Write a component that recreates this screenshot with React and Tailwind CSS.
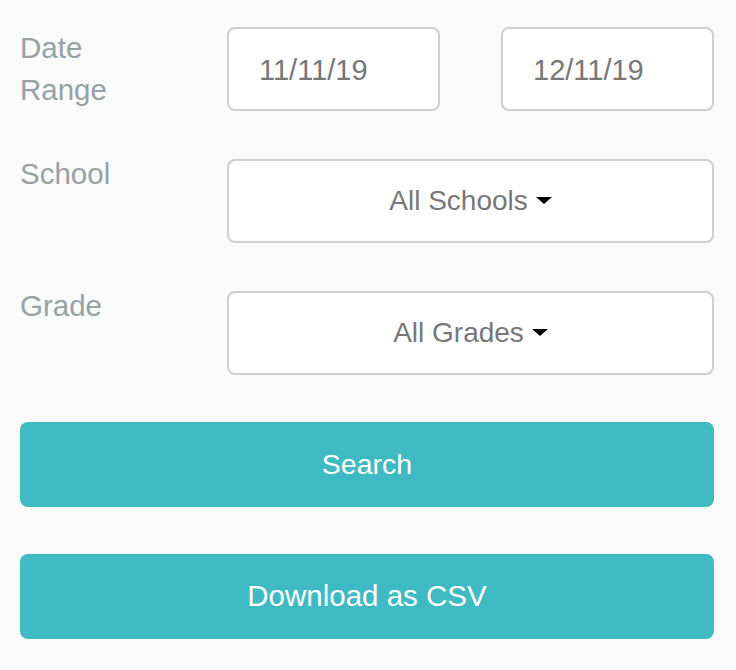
import React from 'react';

const font = { fontFamily: '"Liberation Sans", Arial, Helvetica, sans-serif' };

const Caret = () => (
  <span className="inline-block ml-[8px] w-0 h-0 border-l-[8px] border-r-[8px] border-t-[7px] border-l-transparent border-r-transparent border-t-black align-middle relative top-[-1px]" />
);

const DateInput = ({ value }) => (
  <input
    type="text"
    readOnly
    defaultValue={value}
    className="w-[213px] h-[84px] bg-white border-2 border-[#cfcfcf] rounded-lg pl-[30px] pt-[3px] text-[29px] text-[#777] outline-none"
  />
);

const SelectBox = ({ label }) => (
  <button className="flex-1 h-[84px] bg-white border-2 border-[#cfcfcf] rounded-lg flex items-center justify-center text-[28px] text-[#777]">
    <span>{label}</span>
    <Caret />
  </button>
);

export default function App() {
  return (
    <div className="min-h-screen bg-[#fafafa] pl-5 pr-[22px] pt-[27px]" style={font}>
      <div className="flex items-start">
        <div className="w-[207px] text-[29.5px] leading-[42px] text-[#97a1a3]">
          Date<br />Range
        </div>
        <div className="flex-1 flex justify-between">
          <DateInput value="11/11/19" />
          <DateInput value="12/11/19" />
        </div>
      </div>

      <div className="flex items-start mt-[48px]">
        <div className="w-[207px] text-[29.5px] leading-[30px] text-[#97a1a3]">School</div>
        <SelectBox label="All Schools" />
      </div>

      <div className="flex items-start mt-[48px]">
        <div className="w-[207px] text-[29.5px] leading-[30px] text-[#97a1a3]">Grade</div>
        <SelectBox label="All Grades" />
      </div>

      <button className="w-full h-[85px] mt-[47px] bg-[#40bac2] rounded-lg text-white text-[28.5px]">
        Search
      </button>

      <button className="w-full h-[85px] mt-[47px] bg-[#40bac2] rounded-lg text-white text-[29.5px]">
        Download as CSV
      </button>
    </div>
  );
}
